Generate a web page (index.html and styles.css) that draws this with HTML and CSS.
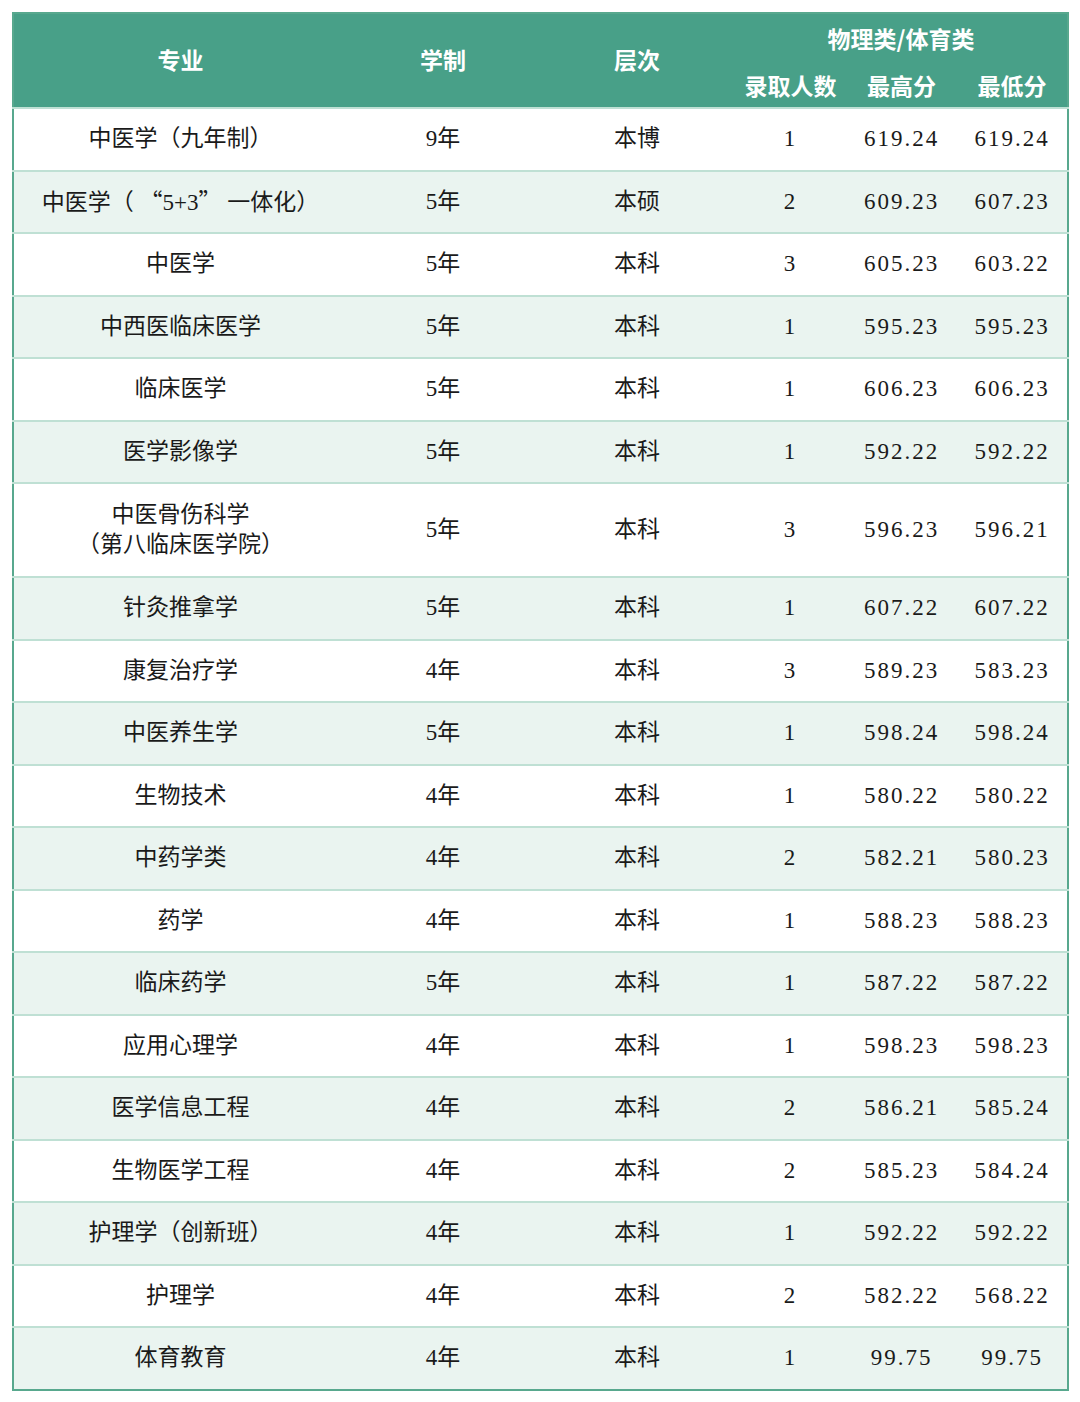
FILE: index.html
```html
<!DOCTYPE html>
<html lang="zh">
<head>
<meta charset="utf-8">
<link rel="stylesheet" href="styles.css">
</head>
<body>
<table class="score">
  <colgroup>
    <col class="c-major"><col class="c-len"><col class="c-lvl"><col class="c-n"><col class="c-n"><col class="c-n">
  </colgroup>
  <thead>
    <tr class="h1">
      <th rowspan="2" class="main">专业</th>
      <th rowspan="2" class="main">学制</th>
      <th rowspan="2" class="main">层次</th>
      <th colspan="3" class="group">物理类/体育类</th>
    </tr>
    <tr class="h2">
      <th>录取人数</th>
      <th>最高分</th>
      <th>最低分</th>
    </tr>
  </thead>
  <tbody>
    <tr><td>中医学（九年制）</td><td>9年</td><td>本博</td><td class="num">1</td><td class="num">619.24</td><td class="num">619.24</td></tr>
    <tr><td>中医学（ <span class="q">“</span>5+3<span class="q">”</span> 一体化）</td><td>5年</td><td>本硕</td><td class="num">2</td><td class="num">609.23</td><td class="num">607.23</td></tr>
    <tr><td>中医学</td><td>5年</td><td>本科</td><td class="num">3</td><td class="num">605.23</td><td class="num">603.22</td></tr>
    <tr><td>中西医临床医学</td><td>5年</td><td>本科</td><td class="num">1</td><td class="num">595.23</td><td class="num">595.23</td></tr>
    <tr><td>临床医学</td><td>5年</td><td>本科</td><td class="num">1</td><td class="num">606.23</td><td class="num">606.23</td></tr>
    <tr><td>医学影像学</td><td>5年</td><td>本科</td><td class="num">1</td><td class="num">592.22</td><td class="num">592.22</td></tr>
    <tr class="tall"><td>中医骨伤科学<br>（第八临床医学院）</td><td>5年</td><td>本科</td><td class="num">3</td><td class="num">596.23</td><td class="num">596.21</td></tr>
    <tr><td>针灸推拿学</td><td>5年</td><td>本科</td><td class="num">1</td><td class="num">607.22</td><td class="num">607.22</td></tr>
    <tr><td>康复治疗学</td><td>4年</td><td>本科</td><td class="num">3</td><td class="num">589.23</td><td class="num">583.23</td></tr>
    <tr><td>中医养生学</td><td>5年</td><td>本科</td><td class="num">1</td><td class="num">598.24</td><td class="num">598.24</td></tr>
    <tr><td>生物技术</td><td>4年</td><td>本科</td><td class="num">1</td><td class="num">580.22</td><td class="num">580.22</td></tr>
    <tr><td>中药学类</td><td>4年</td><td>本科</td><td class="num">2</td><td class="num">582.21</td><td class="num">580.23</td></tr>
    <tr><td>药学</td><td>4年</td><td>本科</td><td class="num">1</td><td class="num">588.23</td><td class="num">588.23</td></tr>
    <tr><td>临床药学</td><td>5年</td><td>本科</td><td class="num">1</td><td class="num">587.22</td><td class="num">587.22</td></tr>
    <tr><td>应用心理学</td><td>4年</td><td>本科</td><td class="num">1</td><td class="num">598.23</td><td class="num">598.23</td></tr>
    <tr><td>医学信息工程</td><td>4年</td><td>本科</td><td class="num">2</td><td class="num">586.21</td><td class="num">585.24</td></tr>
    <tr><td>生物医学工程</td><td>4年</td><td>本科</td><td class="num">2</td><td class="num">585.23</td><td class="num">584.24</td></tr>
    <tr><td>护理学（创新班）</td><td>4年</td><td>本科</td><td class="num">1</td><td class="num">592.22</td><td class="num">592.22</td></tr>
    <tr><td>护理学</td><td>4年</td><td>本科</td><td class="num">2</td><td class="num">582.22</td><td class="num">568.22</td></tr>
    <tr><td>体育教育</td><td>4年</td><td>本科</td><td class="num">1</td><td class="num">99.75</td><td class="num">99.75</td></tr>
  </tbody>
</table>
</body>
</html>
```

FILE: styles.css
```css
html, body {
  margin: 0;
  padding: 0;
  background: #ffffff;
}
body {
  padding: 12px 0 0 12px;
}
.score {
  width: 1056px;
  border-collapse: collapse;
  table-layout: fixed;
  border: 2px solid #58a88e;
  font-family: "Liberation Serif", "Noto Sans CJK SC", serif;
  font-size: 23px;
  color: #1a1a1a;
  text-spacing-trim: space-all;
}
.c-major { width: 334px; }
.c-len { width: 192px; }
.c-lvl { width: 196px; }
.c-n { width: 111px; }

.score thead th {
  background: #48a088;
  color: #ffffff;
  font-family: "Noto Sans CJK SC", "Noto Sans", sans-serif;
  font-weight: 700;
  font-size: 23px;
  padding: 0;
  border: none;
}
.h1 { height: 56px; }
.score thead th.main { padding-bottom: 3px; }
.score thead th.group { vertical-align: middle; padding-bottom: 8px; line-height: 30px; }
.h2 { height: 39px; }
.h2 th { vertical-align: top; line-height: 32px; }

.score tbody td {
  text-align: center;
  vertical-align: middle;
  padding: 0;
  height: 60.5px;
  line-height: 30px;
  border-top: 2px solid #bfe0d4;
}
.score tbody tr:nth-child(even) td {
  background: #eaf4f0;
}
.score tbody tr.tall td {
  height: 92px;
}
.score tbody td.num {
  letter-spacing: 2px;
}
.q {
  font-family: "Noto Sans CJK SC", sans-serif;
  font-feature-settings: "fwid" 1;
}
```
